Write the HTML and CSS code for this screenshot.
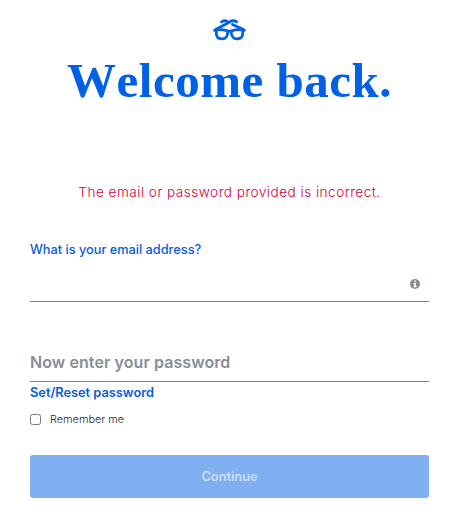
FILE: index.html
```html
<!DOCTYPE html>
<html lang="en">
<head>
  <meta charset="UTF-8">
  <meta name="viewport" content="width=device-width, initial-scale=1.0">
  <title>Welcome back</title>
  <link rel="stylesheet" href="styles.css">
</head>
<body>
  <div class="login">
    <!-- Logo -->
    <svg class="logo" width="33" height="22" viewBox="0 0 33 22" fill="none" stroke="#0061e6" stroke-width="2.8" stroke-linecap="round" stroke-linejoin="round">
      <path d="M3 10.2 L16 3.4 Q19.5 .4 23.5 2.8"/>
      <path d="M30 10.2 L19.5 5.4 M14 2.2 Q11.5 1 8.5 2.9"/>
      <path d="M1.6 11.4 C4 10.6 10 10.4 14.5 11.8 Q16.5 12.4 18.5 11.8 C23 10.4 29 10.6 31.4 11.4"/>
      <path d="M3.2 12 C3 18 4.4 19.9 9 19.9 C13.2 19.9 14.6 17.5 14.9 12.4"/>
      <path d="M18.1 12.4 C18.4 17.5 19.8 19.9 24 19.9 C28.6 19.9 30 18 29.8 12"/>
    </svg>

    <h1>Welcome back.</h1>
    <p class="error">The email or password provided is incorrect.</p>

    <!-- Login Form -->
    <form>
      <label class="email-label" for="email">What is your email address?</label>
      <div class="field">
        <input type="email" id="email">
        <svg class="info" width="10" height="10" viewBox="0 0 10 10">
          <circle cx="5" cy="5" r="5" fill="#868e96"/>
          <path d="M4.2 1.5h1.7v1.4H4.2z M3.5 4h2.4v3.1h.7v1.1H3.5V7.1h.7V5h-.7z" fill="#fff"/>
        </svg>
      </div>

      <div class="field password">
        <input type="password" id="password" placeholder="Now enter your password">
      </div>
      <a class="reset" href="#">Set/Reset password</a>

      <label class="remember">
        <input type="checkbox">
        <span>Remember me</span>
      </label>

      <button type="submit" disabled>Continue</button>
    </form>
  </div>
</body>
</html>
```

FILE: styles.css
```css
* {
  box-sizing: border-box;
}

body {
  margin: 0;
  background-color: white;
  font-family: Inter, sans-serif;
}

.login {
  width: 399px;
  margin-left: 30px;
  padding-top: 19px;
}

.logo {
  display: block;
  margin: 0 auto;
}

h1 {
  margin: 12px 0 0;
  color: #0061e6;
  font-family: "Liberation Serif", serif;
  font-size: 49px;
  font-kerning: none;
  line-height: 56px;
  letter-spacing: 0.5px;
  text-align: center;
  white-space: nowrap;
}

.error {
  margin: 73px 0 0;
  color: #d6003c;
  font-size: 13.6px;
  font-weight: 300;
  line-height: 20px;
  letter-spacing: 0.48px;
  text-align: center;
  white-space: nowrap;
}

/* Fields */
.email-label {
  display: block;
  margin-top: 38px;
  color: #0b5bdf;
  font-size: 12.75px;
  font-weight: 500;
  line-height: 20px;
}

.field {
  display: flex;
  align-items: center;
  height: 42px;
  padding-right: 9px;
  border-bottom: 1px solid #7c858e;
}

.field input {
  flex: 1;
  min-width: 0;
  padding: 0;
  border: none;
  outline: none;
  background: none;
  font-family: inherit;
  font-size: 16px;
  font-weight: 600;
  letter-spacing: 0.08px;
}

.field input::placeholder {
  color: #868e96;
}

.info {
  margin-top: 7px;
}

.password {
  height: 38px;
  margin-top: 42px;
  padding-bottom: 2px;
}

.reset {
  display: block;
  margin-top: 1px;
  color: #0b5bdf;
  font-size: 12.8px;
  font-weight: 600;
  line-height: 20px;
  text-decoration: none;
}

.remember {
  display: flex;
  align-items: center;
  gap: 9px;
  height: 16px;
  margin-top: 8px;
  color: #212529;
  font-size: 10.9px;
  font-weight: 300;
}

.remember input {
  width: 11px;
  height: 11px;
  margin: 0;
}

.remember span {
  margin-top: -1px;
}

/* Continue Button */
button {
  display: block;
  width: 100%;
  height: 43px;
  margin-top: 28px;
  padding-bottom: 2px;
  border: none;
  border-radius: 3px;
  background-color: #80aff2;
  color: #cbdff9;
  font-family: inherit;
  font-size: 12.8px;
  font-weight: 600;
}
```
